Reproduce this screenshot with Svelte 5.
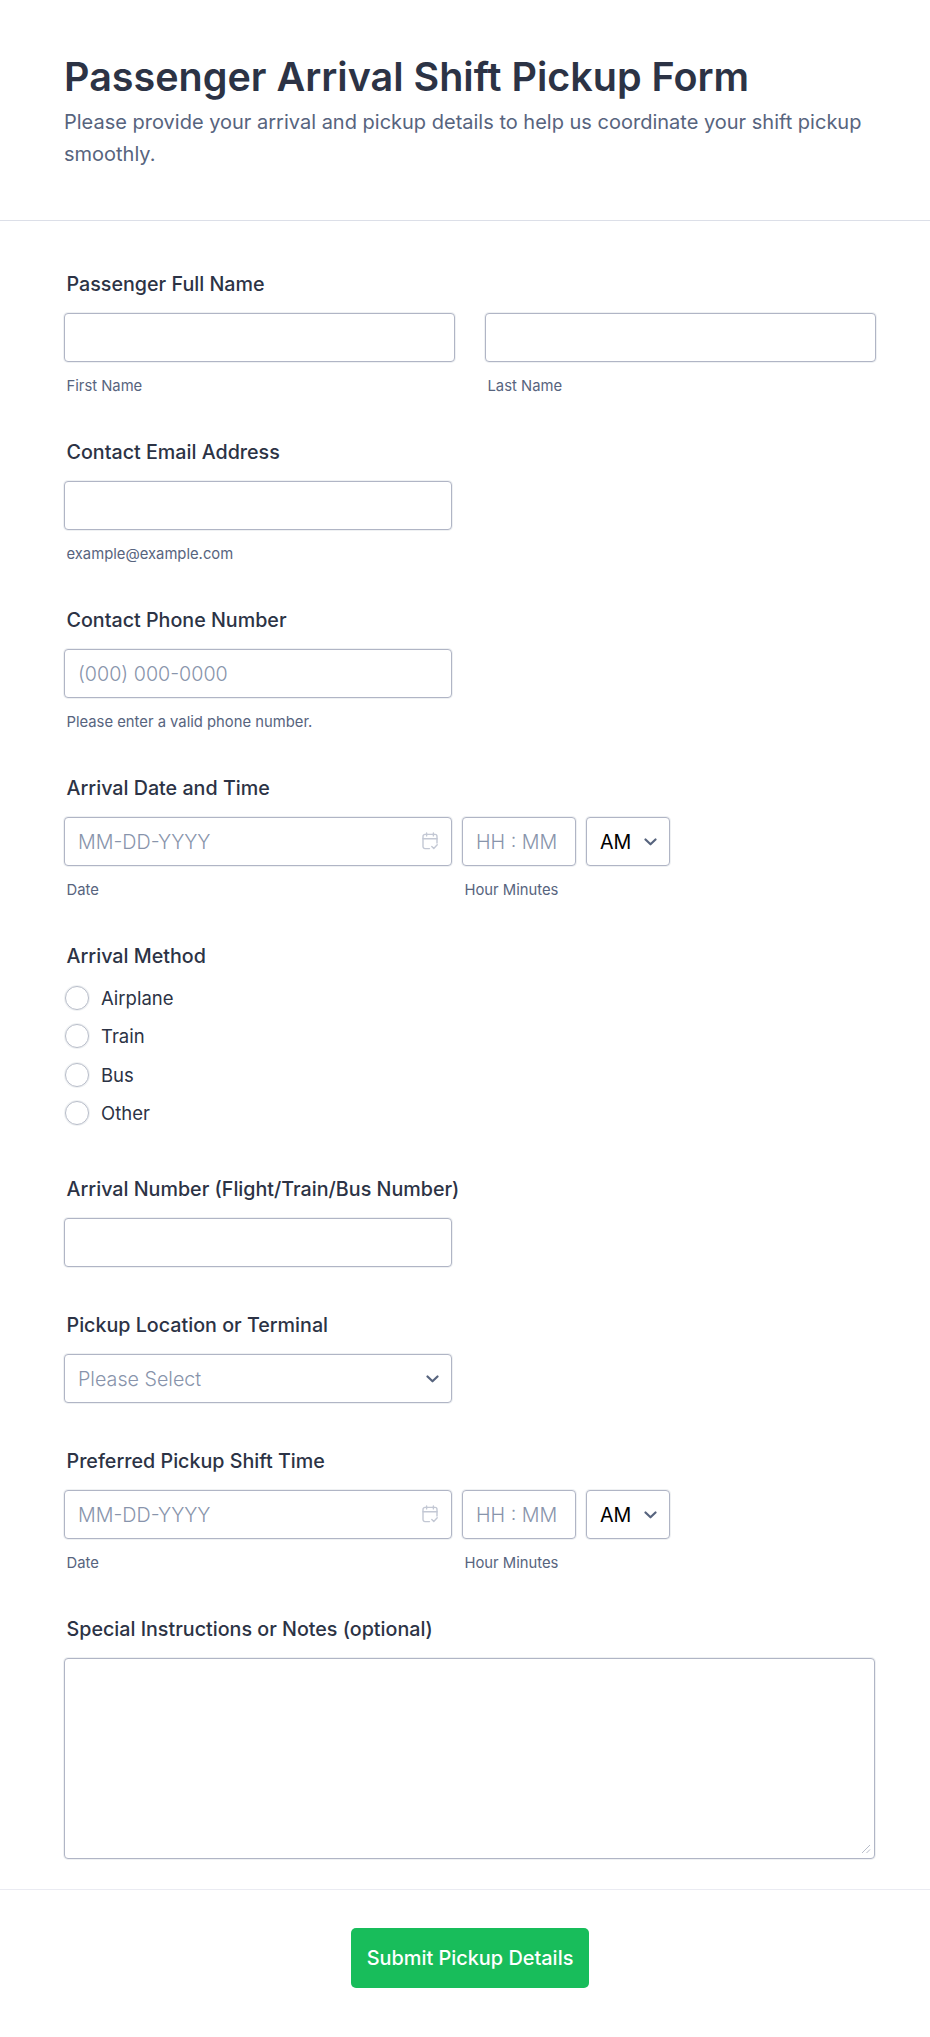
<script>
  const methods = ['Airplane', 'Train', 'Bus', 'Other'];
</script>

{#snippet calendar()}
  <svg class="cal" viewBox="0 0 16 18" width="16" height="18" fill="none" stroke="#c3c8d4" stroke-width="1.4" stroke-linecap="round" stroke-linejoin="round" aria-hidden="true">
    <path d="M7.5 16.6H3a2 2 0 0 1-2-2V4.4a2 2 0 0 1 2-2h10a2 2 0 0 1 2 2v6.6" />
    <path d="M1 6.8h14M4.6 .9v3M11.4 .9v3" />
    <path d="M9.8 14.4l2 2 3.4-3.6" />
  </svg>
{/snippet}

{#snippet chevron()}
  <svg class="chev" viewBox="0 0 13 8" width="13" height="8" fill="none" stroke="#57647e" stroke-width="2.2" stroke-linecap="round" stroke-linejoin="round" aria-hidden="true">
    <path d="M1.5 1.5L6.5 6.3l5-4.8" />
  </svg>
{/snippet}

{#snippet dateTime(label)}
  <div class="field">
    <div class="label">{label}</div>
    <div class="datetime">
      <div class="col date">
        <div class="iconbox">
          <input class="input" type="text" placeholder="MM-DD-YYYY" />
          {@render calendar()}
        </div>
        <span class="sub">Date</span>
      </div>
      <div class="col time">
        <input class="input" type="text" placeholder="HH : MM" />
        <span class="sub">Hour Minutes</span>
      </div>
      <div class="col ampm">
        <div class="iconbox">
          <div class="input selectbox">AM</div>
          {@render chevron()}
        </div>
      </div>
    </div>
  </div>
{/snippet}

<div class="page">
  <header class="head">
    <h1>Passenger Arrival Shift Pickup Form</h1>
    <p>Please provide your arrival and pickup details to help us coordinate your shift pickup smoothly.</p>
  </header>

  <form class="form">
    <div class="field">
      <div class="label">Passenger Full Name</div>
      <div class="names">
        <div class="col">
          <input class="input" type="text" />
          <span class="sub">First Name</span>
        </div>
        <div class="col">
          <input class="input" type="text" />
          <span class="sub">Last Name</span>
        </div>
      </div>
    </div>

    <div class="field narrow">
      <div class="label">Contact Email Address</div>
      <input class="input" type="text" />
      <span class="sub">example@example.com</span>
    </div>

    <div class="field narrow">
      <div class="label">Contact Phone Number</div>
      <input class="input" type="text" placeholder="(000) 000-0000" />
      <span class="sub">Please enter a valid phone number.</span>
    </div>

    {@render dateTime('Arrival Date and Time')}

    <div class="field radios">
      <div class="label">Arrival Method</div>
      {#each methods as m}
        <label class="radio">
          <span class="dot"></span>
          <span>{m}</span>
        </label>
      {/each}
    </div>

    <div class="field narrow plain">
      <div class="label">Arrival Number (Flight/Train/Bus Number)</div>
      <input class="input" type="text" />
    </div>

    <div class="field narrow plain">
      <div class="label">Pickup Location or Terminal</div>
      <div class="iconbox">
        <div class="input selectbox placeholder">Please Select</div>
        {@render chevron()}
      </div>
    </div>

    {@render dateTime('Preferred Pickup Shift Time')}

    <div class="field last">
      <div class="label">Special Instructions or Notes (optional)</div>
      <div class="iconbox">
        <textarea class="input area"></textarea>
        <svg class="grip" viewBox="0 0 10 10" width="10" height="10" fill="none" stroke="#b8bdc9" stroke-width="1" aria-hidden="true">
          <path d="M1 9l8-8M5.5 9L9 5.5" />
        </svg>
      </div>
    </div>
  </form>

  <footer class="foot">
    <button type="button" class="submit">Submit Pickup Details</button>
  </footer>
</div>

<style>
  :global(body) {
    background: #fff;
  }

  .page {
    font-family: Inter, 'Liberation Sans', sans-serif;
    color: #2c3345;
    height: 2037px;
    overflow: hidden;
  }

  .head {
    padding: 50px 64px 50px;
    border-bottom: 1px solid #dcdfe8;
  }

  h1 {
    margin: 0 0 1px;
    font-size: 39.5px;
    line-height: 55px;
    font-weight: 600;
  }

  .head p {
    margin: 0;
    font-size: 20px;
    line-height: 32px;
    color: #57647e;
  }

  .form {
    padding: 51px 55px 0 64px;
  }

  .field {
    margin-bottom: 45px;
    display: flex;
    flex-direction: column;
  }

  .narrow {
    width: 388px;
  }

  .plain {
    margin-bottom: 46px;
  }

  .label {
    font-size: 19.7px;
    line-height: 24px;
    font-weight: 500;
    padding-left: 2.5px;
    margin-bottom: 17px;
    white-space: nowrap;
  }

  .input {
    box-sizing: border-box;
    display: block;
    width: 100%;
    height: 49px;
    padding: 1px 13px 0;
    border: 1px solid #b0b5c5;
    border-radius: 4px;
    box-shadow: 0 0 0 1px rgba(184, 189, 201, 0.22);
    background: #fff;
    font: 300 19.7px Inter, sans-serif;
    color: #000;
    outline: none;
  }

  .input::placeholder,
  .placeholder {
    color: #8894ab;
    opacity: 1;
  }

  .sub {
    display: block;
    margin-top: 15px;
    padding-left: 2.5px;
    font-size: 14.8px;
    line-height: 18px;
    color: #57647e;
  }

  .names {
    display: grid;
    grid-template-columns: 391px 391px;
    gap: 30px;
  }

  .datetime {
    display: flex;
    gap: 10px;
  }

  .date {
    width: 388px;
  }

  .time {
    width: 114px;
  }

  .ampm {
    width: 84px;
  }

  .iconbox {
    position: relative;
  }

  .selectbox {
    display: flex;
    align-items: center;
    font-weight: 400;
  }

  .placeholder {
    font-weight: 300;
  }

  .cal {
    position: absolute;
    right: 14px;
    top: 15px;
  }

  .chev {
    position: absolute;
    right: 13px;
    top: 21px;
  }

  .grip {
    position: absolute;
    right: 4px;
    bottom: 5px;
  }

  .radio {
    display: flex;
    align-items: center;
    gap: 12px;
    height: 38.3px;
    font-size: 18.5px;
    font-weight: 400;
  }

  .radios .label {
    margin-bottom: 11px;
  }

  .radios {
    margin-bottom: 45px;
  }

  .dot {
    box-sizing: border-box;
    width: 24px;
    height: 24px;
    margin: 0 0.5px;
    border: 1px solid #b8bdc9;
    border-radius: 50%;
    box-shadow: 0 0 0 1px rgba(184, 189, 201, 0.22);
    background: #fff;
  }

  .last {
    margin-bottom: 30px;
  }

  .area {
    height: 201px;
    padding: 10px 13px;
    resize: none;
  }

  .foot {
    border-top: 1px solid #eaebf2;
    padding: 38px 0 0 10px;
    display: flex;
    justify-content: center;
  }

  .submit {
    width: 238px;
    height: 60px;
    border: none;
    border-radius: 5px;
    background: #18bd5b;
    color: #fff;
    font: 500 19.9px Inter, sans-serif;
  }
</style>
